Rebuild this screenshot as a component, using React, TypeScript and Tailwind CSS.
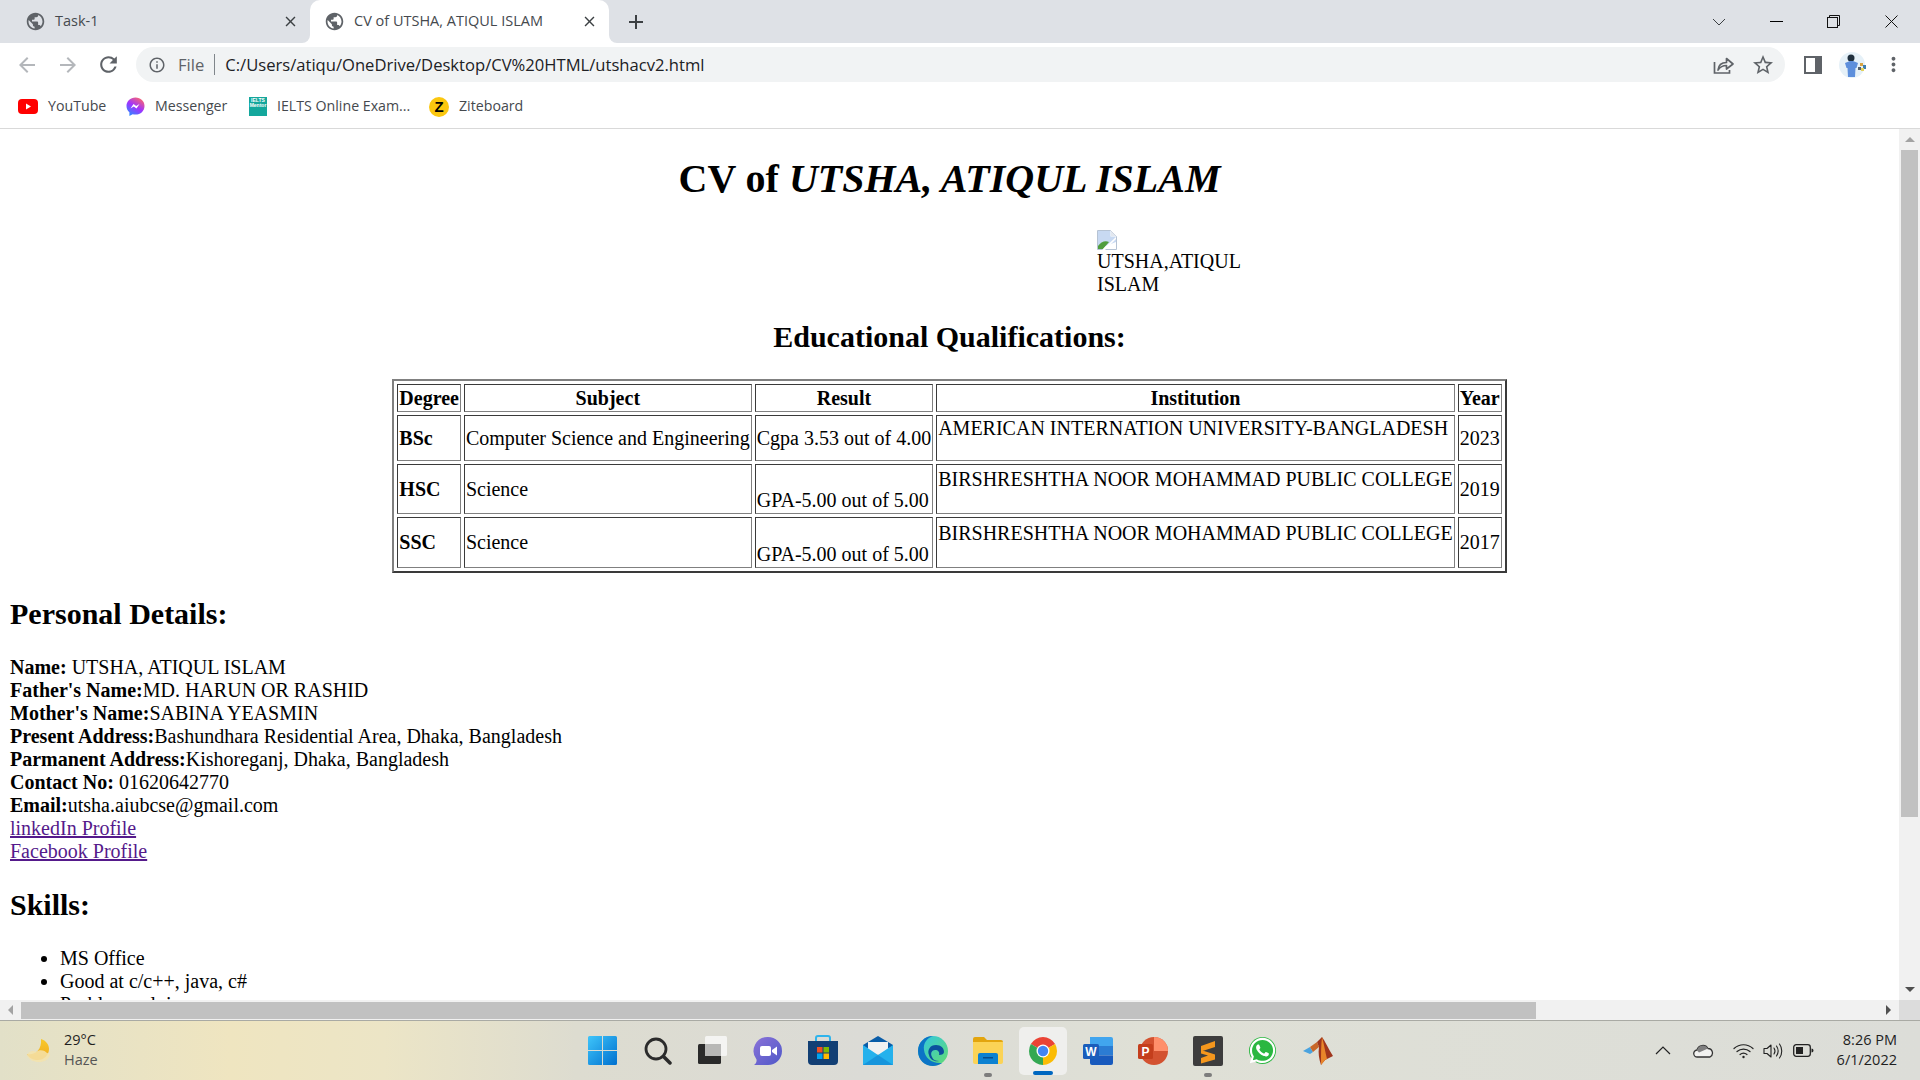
import { MdArrowBack, MdArrowForward, MdInfoOutline, MdMoreVert, MdPublic, MdRefresh, MdStarBorder, MdClose, MdAdd } from 'react-icons/md'
import { FaWhatsapp } from 'react-icons/fa'

const qualifications = [
  { degree: 'BSc', subject: 'Computer Science and Engineering', result: 'Cgpa 3.53 out of 4.00', institution: 'AMERICAN INTERNATION UNIVERSITY-BANGLADESH', year: '2023', rowCls: 'h-[46px]', instCls: '' },
  { degree: 'HSC', subject: 'Science', result: 'GPA-5.00 out of 5.00', institution: 'BIRSHRESHTHA NOOR MOHAMMAD PUBLIC COLLEGE', year: '2019', rowCls: 'h-[50px]', instCls: 'pt-[2.5px]' },
  { degree: 'SSC', subject: 'Science', result: 'GPA-5.00 out of 5.00', institution: 'BIRSHRESHTHA NOOR MOHAMMAD PUBLIC COLLEGE', year: '2017', rowCls: 'h-[51px]', instCls: 'pt-[3.5px]' },
]

const cell = 'border border-t-[#3a3a3a] border-l-[#3a3a3a] border-r-[#808080] border-b-[#808080] p-[1px]'

function Tab({ title, active }: { title: string; active?: boolean }) {
  return (
    <div className={`relative flex h-[43px] w-[299px] items-center pr-[11px] pl-[14px] ${active ? 'rounded-t-[10px] bg-white' : ''}`}>
      <MdPublic size={21} className="shrink-0 text-[#5f6368]" />
      <span className="ml-[9px] flex-1 pb-[2px] text-[14.5px] text-[#45494e]">{title}</span>
      <MdClose size={17} className="text-[#3c4043]" />
      {active && (
        <>
          <div className="absolute bottom-0 -left-[8px] h-2 w-2 bg-white"><div className="h-2 w-2 rounded-br-[8px] bg-[#dee1e6]" /></div>
          <div className="absolute -right-[8px] bottom-0 h-2 w-2 bg-white"><div className="h-2 w-2 rounded-bl-[8px] bg-[#dee1e6]" /></div>
        </>
      )}
    </div>
  )
}

function ShareIcon() {
  return (
    <svg width="22" height="20" viewBox="0 0 22 20" fill="none" stroke="#5f6368" strokeWidth="1.7">
      <path d="M1.5 7v11h15v-3" />
      <path d="M5 15c.5-5 4-7.5 8.5-7.5V3.500l6.500 5.500-6.500 5v-3.500c-3.500 0-6.500 1.500-8.500 4.500z" strokeLinejoin="round" />
    </svg>
  )
}

function SidePanelIcon() {
  return (
    <svg width="18" height="18" viewBox="0 0 18 18">
      <rect width="18" height="18" fill="#5f6368" />
      <rect x="2" y="2" width="9" height="14" fill="#fff" />
    </svg>
  )
}

function Avatar() {
  return (
    <svg width="30" height="26" viewBox="0 0 30 26">
      <circle cx="13" cy="13" r="13" fill="#e6f1f8" />
      <circle cx="12" cy="6" r="3.500" fill="#20303e" />
      <path d="M6 11l5-2h3l5 2-1.500 5-1 0-.5 9H9l-.5-9-1 0z" fill="#5d8fdc" />
      <rect x="21" y="11" width="3" height="3" fill="#d9a544" />
      <rect x="24" y="13" width="3" height="4" fill="#3f7fb0" />
      <rect x="22" y="16" width="3" height="3" fill="#e4d25a" />
      <rect x="19" y="15" width="3" height="3" fill="#55606b" />
    </svg>
  )
}

function YouTubeIcon() {
  return (
    <svg width="20" height="15" viewBox="0 0 20 15">
      <rect width="20" height="15" rx="4" fill="#ff0000" />
      <path d="M8 4.500l5 3-5 3z" fill="#fff" />
    </svg>
  )
}

function MessengerIcon() {
  return (
    <svg width="19" height="20" viewBox="0 0 19 20">
      <defs>
        <linearGradient id="msg" x1="0.200" y1="1" x2="0.800" y2="0">
          <stop offset="0" stopColor="#2a8cff" />
          <stop offset="0.500" stopColor="#a033ff" />
          <stop offset="1" stopColor="#ff6968" />
        </linearGradient>
      </defs>
      <path d="M9.500.500C4.300.500.500 4.200.500 9c0 2.600 1 4.700 2.900 6.200V19l3.200-1.800c.9.300 1.900.400 2.900.400 5.200 0 9-3.700 9-8.600S14.700.500 9.500.500z" fill="url(#msg)" />
      <path d="M4.500 11.500l3-4.500 2.700 2 3.300-2-3 4.500-2.700-2z" fill="#fff" />
    </svg>
  )
}

function IeltsIcon() {
  return (
    <div className="flex h-[19px] w-[18px] flex-col items-center justify-start bg-[#14a79c] pt-[1px] font-['Liberation_Sans',sans-serif] text-[5px] leading-[5px] font-bold text-white">
      <span>IELTS</span>
      <span>Mentor</span>
    </div>
  )
}

function ZiteIcon() {
  return (
    <div className="flex h-5 w-5 items-center justify-center rounded-full bg-[#fbc70f] font-['Liberation_Sans',sans-serif] text-[15px] leading-none font-black text-black">Z</div>
  )
}

function BrokenImage() {
  return (
    <svg width="20" height="20" viewBox="0 0 20 20" className="block">
      <path d="M.500.500h13l6 6v13H.500z" fill="#fff" stroke="#b6c3d4" />
      <path d="M1 1h12.500v5.500H19V12l-18 7z" fill="#c8d9f2" />
      <path d="M1 19v-3c3-4 7-6 11-4l-6 7z" fill="#4f9d3d" />
      <path d="M14 1l5 5h-5z" fill="#e3e8ef" />
      <path d="M19 9L8 20h-3L19 7z" fill="#fff" />
    </svg>
  )
}

function Moon() {
  return (
    <svg width="26" height="26" viewBox="0 0 26 26">
      <defs>
        <linearGradient id="moon" x1="0" y1="0" x2="0" y2="1">
          <stop offset="0" stopColor="#f8c92a" />
          <stop offset="1" stopColor="#f0a91e" />
        </linearGradient>
      </defs>
      <path d="M15 1c5 1.500 8 5.500 8 10 0 6-5 11-11 11-5 0-9-2-11-6 7 1.500 15-3 14-15z" fill="url(#moon)" />
      <path d="M1 17c2-4 6-5 9-3 3-3 9-2 11 1 2 0 3 1 3 2-2 5-6 7-11 7-5 0-10-2-12-7z" fill="#f5e3ab" opacity="0.850" />
    </svg>
  )
}

function WindowsLogo() {
  return (
    <svg width="29" height="29" viewBox="0 0 29 29">
      <defs>
        <linearGradient id="win" x1="0" y1="0" x2="1" y2="1">
          <stop offset="0" stopColor="#3fc5fa" />
          <stop offset="1" stopColor="#0070cf" />
        </linearGradient>
      </defs>
      <path d="M0 1.500A1.500 1.500 0 011.500 0H14v14H0zM15 0h12.500A1.500 1.500 0 0129 1.500V14H15zM0 15h14v14H1.500A1.500 1.500 0 010 27.500zM15 15h14v12.500a1.500 1.500 0 01-1.500 1.500H15z" fill="url(#win)" />
    </svg>
  )
}

function SearchIcon() {
  return (
    <svg width="28" height="28" viewBox="0 0 28 28" fill="none" stroke="#2b2b2b" strokeLinecap="round">
      <circle cx="12" cy="12" r="10" strokeWidth="2.800" />
      <path d="M19.500 19.500l6.500 6.500" strokeWidth="3.500" />
    </svg>
  )
}

function TaskView() {
  return (
    <svg width="30" height="30" viewBox="0 0 30 30">
      <rect x="0" y="8" width="23" height="20" rx="1.500" fill="#2a2a2a" />
      <rect x="7" y="0" width="22" height="20" rx="1.500" fill="#f4f4f2" />
      <rect x="7" y="8" width="16" height="12" fill="#b8b8b6" />
    </svg>
  )
}

function TeamsChat() {
  return (
    <svg width="30" height="30" viewBox="0 0 30 30">
      <defs>
        <linearGradient id="teams" x1="0" y1="0" x2="1" y2="1">
          <stop offset="0" stopColor="#8a72d8" />
          <stop offset="1" stopColor="#4f58c8" />
        </linearGradient>
      </defs>
      <path d="M15 1a14 14 0 110 28H1c1.500-1 3-3 2.500-5.500A14 14 0 0115 1z" fill="url(#teams)" />
      <rect x="7" y="10" width="11" height="10" rx="2" fill="#fff" />
      <path d="M19 14l5-3.500v9L19 16z" fill="#fff" />
    </svg>
  )
}

function StoreIcon() {
  return (
    <svg width="30" height="31" viewBox="0 0 30 31">
      <path d="M8 7V3a2 2 0 012-2h10a2 2 0 012 2v4" fill="none" stroke="#2fb4ec" strokeWidth="2" />
      <path d="M0 6h30v20a4 4 0 01-4 4H4a4 4 0 01-4-4z" fill="#123f74" />
      <rect x="9" y="12" width="5.500" height="5.500" fill="#f25022" />
      <rect x="15.500" y="12" width="5.500" height="5.500" fill="#7fba00" />
      <rect x="9" y="18.500" width="5.500" height="5.500" fill="#00a4ef" />
      <rect x="15.500" y="18.500" width="5.500" height="5.500" fill="#ffb900" />
    </svg>
  )
}

function MailIcon() {
  return (
    <svg width="30" height="29" viewBox="0 0 30 29">
      <path d="M15 0l15 9v3H0V9z" fill="#0a5da8" />
      <path d="M5 6h20v12H5z" fill="#f1f1f1" />
      <path d="M0 9l15 10L30 9v20H0z" fill="#25b1ec" />
      <path d="M0 29l15-10 15 10z" fill="#1795dc" />
    </svg>
  )
}

function EdgeIcon() {
  return (
    <svg width="30" height="30" viewBox="0 0 30 30">
      <defs>
        <linearGradient id="edge1" x1="0" y1="0" x2="1" y2="1">
          <stop offset="0" stopColor="#2fc5e8" />
          <stop offset="1" stopColor="#63dc6f" />
        </linearGradient>
      </defs>
      <circle cx="15" cy="15" r="15" fill="url(#edge1)" />
      <path d="M0 15C0 6 7 0 15 0c-6 2-10 7-9 14 1 8 8 14 18 13-3 2-6 3-9 3C7 30 0 24 0 15z" fill="#0c74c6" />
      <path d="M11 19c-2-5 1-10 7-10 5 0 8 3 8 7 0 2-2 3-5 3 1-3-1-5-4-5-3 0-5 3-3 7 1 3 4 4 7 4-4 1-9-1-10-6z" fill="#0b4f9e" />
    </svg>
  )
}

function ExplorerIcon() {
  return (
    <svg width="30" height="27" viewBox="0 0 30 27">
      <path d="M0 2a2 2 0 012-2h9l3 3h14a2 2 0 012 2v3H0z" fill="#e3a50e" />
      <path d="M0 5h30v20a2 2 0 01-2 2H2a2 2 0 01-2-2z" fill="#fbd356" />
      <path d="M5 27V18a2 2 0 012-2h16a2 2 0 012 2v9z" fill="#0c81d1" />
      <rect x="10" y="20" width="10" height="1.500" fill="#074d8c" />
    </svg>
  )
}

function ChromeIcon() {
  return (
    <svg width="28" height="28" viewBox="0 0 28 28">
      <path d="M14 14L26.120 7A14 14 0 001.880 7z" fill="#ea4335" />
      <path d="M14 14L1.880 7A14 14 0 0014 28z" fill="#34a853" />
      <path d="M14 14L14 28A14 14 0 0026.120 7z" fill="#fbbc04" />
      <circle cx="14" cy="14" r="6.500" fill="#fff" />
      <circle cx="14" cy="14" r="5.200" fill="#4285f4" />
    </svg>
  )
}

function WordIcon() {
  return (
    <svg width="30" height="28" viewBox="0 0 30 28">
      <path d="M7 0h21a2 2 0 012 2v7H7z" fill="#41a5ee" />
      <rect x="7" y="9" width="23" height="9.500" fill="#2b7cd3" />
      <path d="M7 18.500h23V26a2 2 0 01-2 2H9a2 2 0 01-2-2z" fill="#185abd" />
      <rect x="0" y="7" width="16" height="15" rx="1.500" fill="#1a5dbb" />
      <text x="8" y="18.500" textAnchor="middle" fontFamily="Liberation Sans" fontSize="12" fontWeight="700" fill="#fff">W</text>
    </svg>
  )
}

function PowerPointIcon() {
  return (
    <svg width="30" height="28" viewBox="0 0 30 28">
      <circle cx="16" cy="14" r="14" fill="#d35230" />
      <path d="M16 0a14 14 0 0114 14H16z" fill="#ff8f6b" />
      <rect x="0" y="7" width="15" height="15" rx="1.500" fill="#c43e1c" />
      <text x="7.500" y="18.500" textAnchor="middle" fontFamily="Liberation Sans" fontSize="12" fontWeight="700" fill="#fff">P</text>
    </svg>
  )
}

function SublimeIcon() {
  return (
    <svg width="30" height="30" viewBox="0 0 30 30">
      <rect width="30" height="30" rx="2" fill="#3d3d3d" />
      <path d="M22 5v6L8 15.500V10zM8 14l14 4.500v5L8 27.500v-5.500L15 19.500 8 17.500z" fill="#f5971d" />
    </svg>
  )
}

function WhatsAppIcon() {
  return (
    <div className="flex h-[27px] w-[27px] items-center justify-center rounded-full bg-[#2bb741] text-white">
      <FaWhatsapp size={29} />
    </div>
  )
}

function MatlabIcon() {
  return (
    <svg width="30" height="28" viewBox="0 0 30 28">
      <path d="M0 14l7-4 3 5-3 2z" fill="#4aa3df" />
      <path d="M7 10l7-5 2 5-6 5z" fill="#c9682a" />
      <path d="M14 5l5-5c3 4 6 11 11 19l-6 3c-3 1-4 4-6 6-2-6-3-12-2-18z" fill="#a0361d" />
      <path d="M19 0c-1 8-1 17-1 28 2-2 3-5 6-6-2-8-3-15-5-22z" fill="#e8862a" />
    </svg>
  )
}

function TrayCloud() {
  return (
    <svg width="21" height="14" viewBox="0 0 21 14">
      <path d="M4.500 13A3.500 3.500 0 014 6a6 6 0 0111-1.500A4.500 4.500 0 0117 13z" fill="#f2f2f0" stroke="#333" strokeWidth="1.300" />
      <path d="M4 6.500a6 6 0 0111-2l-9 4z" fill="#7f7f7f" />
    </svg>
  )
}

function TrayWifi() {
  return (
    <svg width="21" height="16" viewBox="0 0 21 16" fill="none" stroke="#222" strokeWidth="1.200" strokeLinecap="round">
      <path d="M1 5.500c5.500-5 13.500-5 19 0" />
      <path d="M4 8.500c3.800-3.300 9.200-3.300 13 0" />
      <path d="M7 11.500c2-1.600 5-1.600 7 0" />
      <circle cx="10.500" cy="14" r="1.200" fill="#222" stroke="none" />
    </svg>
  )
}

function TrayVolume() {
  return (
    <svg width="21" height="16" viewBox="0 0 21 16" fill="none" stroke="#222" strokeWidth="1.100" strokeLinecap="round" strokeLinejoin="round">
      <path d="M1 5.500h3l4-3.500v12l-4-3.500H1z" />
      <path d="M11 5c1.200 1.800 1.200 4.200 0 6" />
      <path d="M13.500 3c2 3 2 7 0 10" />
      <path d="M16.500 1c3 4 3 10 0 14" />
    </svg>
  )
}

function TrayBattery() {
  return (
    <svg width="21" height="13" viewBox="0 0 21 13">
      <rect x=".700" y=".700" width="16.600" height="11.600" rx="2.500" fill="none" stroke="#222" strokeWidth="1.300" />
      <rect x="3" y="3" width="7" height="7" fill="#222" />
      <path d="M18.500 4.500c1 0 2 .800 2 2s-1 2-2 2z" fill="#222" />
    </svg>
  )
}

const taskbarApps = [
  { id: 'start', icon: <WindowsLogo /> },
  { id: 'search', icon: <SearchIcon /> },
  { id: 'taskview', icon: <TaskView /> },
  { id: 'teams', icon: <TeamsChat /> },
  { id: 'store', icon: <StoreIcon /> },
  { id: 'mail', icon: <MailIcon /> },
  { id: 'edge', icon: <EdgeIcon /> },
  { id: 'explorer', icon: <ExplorerIcon />, running: true },
  { id: 'chrome', icon: <ChromeIcon />, active: true },
  { id: 'word', icon: <WordIcon /> },
  { id: 'powerpoint', icon: <PowerPointIcon /> },
  { id: 'sublime', icon: <SublimeIcon />, running: true },
  { id: 'whatsapp', icon: <WhatsAppIcon /> },
  { id: 'matlab', icon: <MatlabIcon /> },
]

const bookmarks = [
  { label: 'YouTube', icon: <YouTubeIcon />, cls: 'w-[108px]' },
  { label: 'Messenger', icon: <MessengerIcon />, cls: 'w-[123px]' },
  { label: 'IELTS Online Exam...', icon: <IeltsIcon />, cls: 'w-[180px]' },
  { label: 'Ziteboard', icon: <ZiteIcon />, cls: 'w-[100px]' },
]

export default function App() {
  return (
    <div className="flex h-screen flex-col overflow-hidden bg-white font-['Open_Sans',sans-serif]">
      {/* Tab strip */}
      <div className="flex h-[43px] shrink-0 items-center bg-[#dee1e6] pl-[11px]">
        <Tab title="Task-1" />
        <Tab title="CV of UTSHA, ATIQUL ISLAM" active />
        <MdAdd size={24} className="ml-[15px] text-[#3c4043]" />
        <div className="ml-auto flex items-center pr-[22px]">
          <svg width="14" height="8" viewBox="0 0 14 8" fill="none" stroke="#3c4043" className="mr-[44px]"><path d="M1 1l6 6 6-6" /></svg>
          <div className="mr-[44px] h-[1px] w-[13px] bg-black" />
          <svg width="13" height="13" viewBox="0 0 13 13" fill="none" stroke="#111" className="mr-[45px]"><rect x=".5" y="2.500" width="10" height="10" /><path d="M2.500 2.500v-2h10v10h-2" /></svg>
          <svg width="13" height="13" viewBox="0 0 13 13" fill="none" stroke="#111"><path d="M.5.500l12 12M12.500.500l-12 12" /></svg>
        </div>
      </div>

      {/* Toolbar */}
      <div className="flex h-[43px] shrink-0 items-center bg-white">
        <div className="flex w-[136px] items-center pl-[15px]">
          <MdArrowBack size={24} className="text-[#b4b7bb]" />
          <MdArrowForward size={24} className="ml-[17px] text-[#b4b7bb]" />
          <MdRefresh size={25} className="ml-[16px] text-[#5f6368]" />
        </div>
        <div className="flex h-[35px] w-[1649px] items-center rounded-full bg-[#f1f3f4] pr-[10px] pl-[12px] text-[16.6px]">
          <MdInfoOutline size={18} className="text-[#5f6368]" />
          <span className="ml-[12px] pt-[2px] text-[#5f6368]">File</span>
          <div className="mx-[10px] h-[21px] w-[1px] bg-[#80868b]" />
          <span className="pt-[2px] text-[#202124]">C:/Users/atiqu/OneDrive/Desktop/CV%20HTML/utshacv2.html</span>
          <div className="ml-auto flex items-center gap-[16px]">
            <ShareIcon />
            <MdStarBorder size={24} className="text-[#5f6368]" />
          </div>
        </div>
        <div className="flex flex-1 items-center pl-[19px]">
          <SidePanelIcon />
          <div className="ml-[17px]"><Avatar /></div>
          <MdMoreVert size={23} className="ml-[13px] text-[#5f6368]" />
        </div>
      </div>

      {/* Bookmarks */}
      <div className="flex h-[43px] shrink-0 items-center border-b border-[#d9d9d9] bg-white pl-[18px] text-[14.2px] text-[#45494e]">
        {bookmarks.map((b) => (
          <div key={b.label} className={`flex items-center gap-[10px] ${b.cls}`}>
            {b.icon}
            <span className="pb-[2px]">{b.label}</span>
          </div>
        ))}
      </div>

      {/* Page + vertical scrollbar */}
      <div className="flex min-h-0 flex-1">
        <div className="min-w-0 flex-1 overflow-hidden px-[10px] font-['Liberation_Serif','Times_New_Roman',serif] text-[20px] leading-[23px] text-black">
          <h1 className="mt-[27px] mb-[28px] text-center text-[40px] leading-[46px] font-bold">
            CV of <i>UTSHA, ATIQUL ISLAM</i>
          </h1>
          <div className="ml-[1087px] h-[64px] w-[150px]">
            <BrokenImage />
            <div>UTSHA,ATIQUL ISLAM</div>
          </div>
          <h2 className="mt-[25px] mb-[25px] text-center text-[30px] leading-[35px] font-bold">Educational Qualifications:</h2>

          <table className="mx-auto border-separate border-spacing-[3px] border-2 border-t-[#808080] border-l-[#808080] border-r-[#3a3a3a] border-b-[#3a3a3a]">
            <thead>
              <tr className="h-[28px]">
                {['Degree', 'Subject', 'Result', 'Institution', 'Year'].map((h) => (
                  <th key={h} className={`${cell} text-center font-bold`}>{h}</th>
                ))}
              </tr>
            </thead>
            <tbody>
              {qualifications.map((q, i) => (
                <tr key={q.degree} className={q.rowCls}>
                  <td className={`${cell} align-middle font-bold`}>{q.degree}</td>
                  <td className={`${cell} align-middle`}>{q.subject}</td>
                  <td className={`${cell} ${i === 0 ? 'align-middle' : 'align-bottom'}`}>{q.result}</td>
                  <td className={`${cell} align-top ${q.instCls}`}>{q.institution}</td>
                  <td className={`${cell} align-middle`}>{q.year}</td>
                </tr>
              ))}
            </tbody>
          </table>

          <h2 className="mt-[23px] mb-[25px] text-[30px] leading-[35px] font-bold">Personal Details:</h2>
          <div>
            <div><b>Name:</b> UTSHA, ATIQUL ISLAM</div>
            <div><b>Father's Name:</b>MD. HARUN OR RASHID</div>
            <div><b>Mother's Name:</b>SABINA YEASMIN</div>
            <div><b>Present Address:</b>Bashundhara Residential Area, Dhaka, Bangladesh</div>
            <div><b>Parmanent Address:</b>Kishoreganj, Dhaka, Bangladesh</div>
            <div><b>Contact No:</b> 01620642770</div>
            <div><b>Email:</b>utsha.aiubcse@gmail.com</div>
            <div><a className="text-[#551a8b] underline">linkedIn Profile</a></div>
            <div><a className="text-[#551a8b] underline">Facebook Profile</a></div>
          </div>
          <h2 className="mt-[24px] mb-[25px] text-[30px] leading-[35px] font-bold">Skills:</h2>
          <ul className="list-disc pl-[50px]">
            <li>MS Office</li>
            <li>Good at c/c++, java, c#</li>
            <li>Problem solving</li>
          </ul>
        </div>

        <div className="flex w-[21px] shrink-0 flex-col items-center bg-[#f1f1f1]">
          <div className="flex h-[21px] w-full items-center justify-center">
            <div className="h-0 w-0 border-x-[5px] border-b-[5px] border-x-transparent border-b-[#a3a3a3]" />
          </div>
          <div className="h-[667px] w-[17px] bg-[#c1c1c1]" />
          <div className="mt-auto flex h-[21px] w-full items-center justify-center">
            <div className="h-0 w-0 border-x-[5px] border-t-[5px] border-x-transparent border-t-[#505050]" />
          </div>
        </div>
      </div>

      {/* Horizontal scrollbar */}
      <div className="flex h-[20px] shrink-0 items-center bg-[#f1f1f1]">
        <div className="flex h-full w-[21px] items-center justify-center">
          <div className="h-0 w-0 border-y-[5px] border-r-[5px] border-y-transparent border-r-[#a3a3a3]" />
        </div>
        <div className="h-[17px] w-[1515px] bg-[#c1c1c1]" />
        <div className="ml-auto flex h-full w-[21px] items-center justify-center">
          <div className="h-0 w-0 border-y-[5px] border-l-[5px] border-y-transparent border-l-[#505050]" />
        </div>
        <div className="h-full w-[21px] bg-[#dcdcdc]" />
      </div>

      {/* Taskbar */}
      <div className="flex h-[60px] shrink-0 items-center border-t border-[#a9aaa4] bg-[linear-gradient(90deg,#e2e0c8_0%,#efe5c0_12%,#ece5c6_20%,#dddcd0_30%,#dbdbd6_45%,#dfe0d6_60%,#dcddd8_100%)]">
        <div className="flex w-[575px] shrink-0 items-center pl-[26px]">
          <Moon />
          <div className="ml-[12px] pb-[2px] text-[14.5px] leading-[20px]">
            <div className="text-[#1f1f1f]">29°C</div>
            <div className="text-[#555]">Haze</div>
          </div>
        </div>
        <div className="flex">
          {taskbarApps.map((app) => (
            <div key={app.id} className="relative flex h-[59px] w-[55px] items-center justify-center">
              {app.active && <div className="absolute top-[6px] left-[4px] h-[48px] w-[48px] rounded-[5px] bg-[#efefed]" />}
              <div className="relative">{app.icon}</div>
              {app.running && <div className="absolute bottom-[3px] h-[4px] w-[8px] rounded-full bg-[#7d7d7d]" />}
              {app.active && <div className="absolute bottom-[5px] h-[4px] w-[20px] rounded-full bg-[#0067c0]" />}
            </div>
          ))}
        </div>
        <div className="ml-auto flex items-center pr-[23px]">
          <svg width="16" height="9" viewBox="0 0 16 9" fill="none" stroke="#222" strokeWidth="1.200"><path d="M1 8l7-7 7 7" /></svg>
          <div className="ml-[22px]"><TrayCloud /></div>
          <div className="ml-[19px]"><TrayWifi /></div>
          <div className="ml-[9px]"><TrayVolume /></div>
          <div className="ml-[9px]"><TrayBattery /></div>
          <div className="ml-[23px] pb-[2px] text-right text-[14.5px] leading-[20px] text-[#1f1f1f]">
            <div>8:26 PM</div>
            <div>6/1/2022</div>
          </div>
        </div>
      </div>
    </div>
  )
}
